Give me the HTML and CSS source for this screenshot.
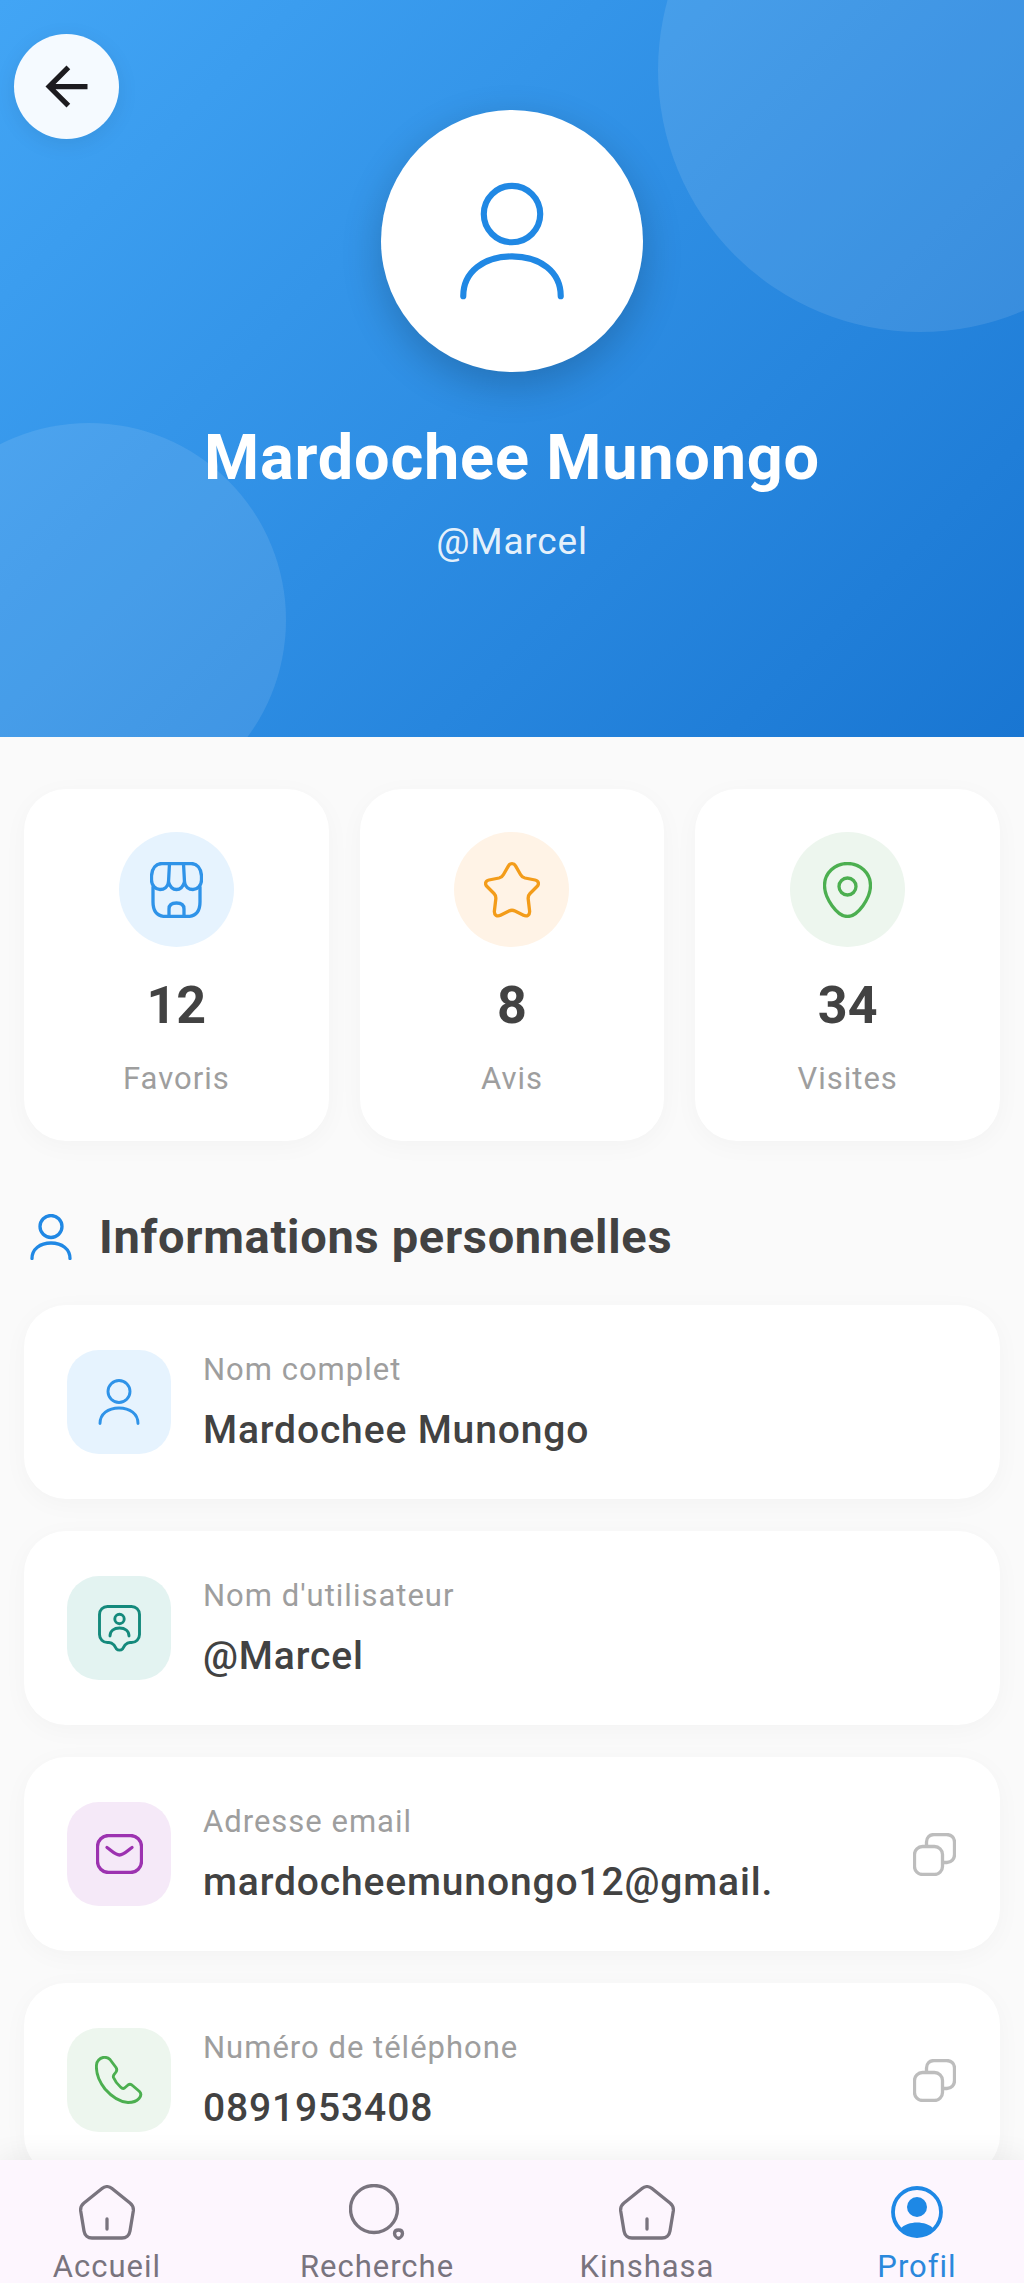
FILE: index.html
```html
<!DOCTYPE html>
<html lang="fr">
<head>
  <meta charset="UTF-8" />
  <title>Profil</title>
  <meta name="viewport" content="width=device-width, initial-scale=1.0" />
  <link rel="stylesheet" href="styles.css">
</head>
<body>
  <!-- Shared icons -->
  <svg class="sprite" aria-hidden="true">
    <symbol id="icon-user" viewBox="0 0 42 46">
      <circle cx="21" cy="12.5" r="11" />
      <path d="M2 44.5C2 35 10 29 21 29C32 29 40 35 40 44.5" />
    </symbol>
    <symbol id="icon-copy" viewBox="0 0 43 43">
      <rect x="1.5" y="13.5" width="28" height="28" rx="8" />
      <path d="M13.5 13V9C13.5 4.5 16.5 1.5 21 1.5H33.5C38 1.5 41.5 4.5 41.5 9V21.5C41.5 26 38.500 29.500 34 29.500H30" />
    </symbol>
    <symbol id="icon-home" viewBox="0 0 56 55">
      <path d="M23 3.500C26 1 30 1 33 3.500L51 18C53.500 20 54.700 23 54.300 26L51 46C50.300 50.500 47 53 43 53H13C9 53 5.700 50.500 5 46L1.700 26C1.300 23 2.500 20 5 18Z" />
      <path d="M28 34V44" />
    </symbol>
  </svg>

  <div class="app">
    <div class="page">
      <!-- Blue header -->
      <header class="hero">
        <div class="blob blob-top"></div>
        <div class="blob blob-left"></div>
        <button class="back-btn" aria-label="Retour">
          <svg width="63" height="63" viewBox="0 0 24 24"><path fill="#1c1b1f" d="M20 11H7.830l5.590-5.590L12 4l-8 8 8 8 1.410-1.410L7.830 13H20v-2z"/></svg>
        </button>
        <div class="avatar">
          <svg class="line-icon avatar-icon" width="108" height="118"><use href="#icon-user"/></svg>
        </div>
        <h1 class="hero-name">Mardochee Munongo</h1>
        <div class="hero-handle">@Marcel</div>
      </header>

      <main class="content">
        <!-- Stats -->
        <section class="stats">
          <div class="stat-card">
            <div class="stat-icon tint-blue">
              <svg class="line-icon" width="53" height="56" viewBox="0 0 53 56">
                <path d="M12 1.500H41C47 1.500 51 6 51.500 14V18C51.500 24 47 27.500 43 27.500C39 27.500 35 25 34.500 20C33 25 30 27.500 26.500 27.500C23 27.500 20 25 18.500 20C18 25 14 27.500 10 27.500C6 27.500 1.500 24 1.500 18V14C2 6 6 1.500 12 1.500Z"/>
                <path d="M19.500 1.500L18.500 20M33.500 1.500L34.500 20"/>
                <path d="M3 25V40C3 50 8 54.500 16 54.500H37C45 54.500 50 50 50 40V25"/>
                <path d="M19 54.500V47C19 43 22 41 26.500 41C31 41 34 43 34 47V54.500"/>
              </svg>
            </div>
            <div class="stat-value">12</div>
            <div class="stat-label">Favoris</div>
          </div>
          <div class="stat-card">
            <div class="stat-icon tint-orange">
              <svg class="line-icon" width="56" height="56" viewBox="0 0 56 56">
                <path d="M24.600 3.600C26 1 30 1 31.400 3.600L36.500 12.500C37.500 14.500 39 15.500 41 16L51 18C54.500 18.700 55.500 22 53 24.500L46 31.500C44.500 33 44 35 44.200 37L45.600 49C46 53 43 55 39.500 53.300L31 49C29 48 27 48 25 49L16.500 53.300C13 55 10 53 10.400 49L11.800 37C12 35 11.500 33 10 31.500L3 24.500C.5 22 1.500 18.700 5 18L15 16C17 15.500 18.500 14.500 19.500 12.500Z"/>
              </svg>
            </div>
            <div class="stat-value">8</div>
            <div class="stat-label">Avis</div>
          </div>
          <div class="stat-card">
            <div class="stat-icon tint-green">
              <svg class="line-icon" width="49" height="56" viewBox="0 0 49 56">
                <path d="M24.500 1.500C37 1.500 47.500 11 47.500 23.500C47.500 36 35 54.500 24.500 54.500C14 54.500 1.500 36 1.500 23.500C1.500 11 12 1.500 24.500 1.500Z"/>
                <circle cx="24.500" cy="24.500" r="8.500"/>
              </svg>
            </div>
            <div class="stat-value">34</div>
            <div class="stat-label">Visites</div>
          </div>
        </section>

        <!-- Personal info -->
        <h2 class="section-title">
          <svg class="line-icon title-icon" width="42" height="46"><use href="#icon-user"/></svg>
          Informations personnelles
        </h2>

        <section class="info-list">
          <div class="info-row">
            <div class="info-icon tint-blue">
              <svg class="line-icon thin" width="42" height="46"><use href="#icon-user"/></svg>
            </div>
            <div class="info-text">
              <div class="info-label">Nom complet</div>
              <div class="info-value">Mardochee Munongo</div>
            </div>
          </div>
          <div class="info-row">
            <div class="info-icon tint-teal">
              <svg class="line-icon thin" width="43" height="47" viewBox="0 0 43 47">
                <path d="M9.500 1.500H33.500C38 1.500 41.500 5 41.500 9.500V29.500C41.500 34 38 37.500 33.500 37.500H32C30 37.500 28.500 38.500 27 40L24.500 44C23 45.500 20 45.500 18.500 44L16 40C14.500 38.500 13 37.500 11 37.500H9.500C5 37.500 1.500 34 1.500 29.500V9.500C1.500 5 5 1.500 9.500 1.500Z"/>
                <circle cx="21.500" cy="14" r="4.700"/>
                <path d="M12 31C12 26 16 23 21.500 23C27 23 31 26 31 31"/>
              </svg>
            </div>
            <div class="info-text">
              <div class="info-label">Nom d'utilisateur</div>
              <div class="info-value">@Marcel</div>
            </div>
          </div>
          <div class="info-row">
            <div class="info-icon tint-purple">
              <svg class="line-icon" width="47" height="40" viewBox="0 0 47 40">
                <rect x="1.500" y="1.500" width="44" height="37" rx="11"/>
                <path d="M11 13.500C16 17 19 21 23.500 21C28 21 31 17 36 13.500"/>
              </svg>
            </div>
            <div class="info-text">
              <div class="info-label">Adresse email</div>
              <div class="info-value">mardocheemunongo12@gmail.</div>
            </div>
            <svg class="line-icon copy-icon" width="43" height="43"><use href="#icon-copy"/></svg>
          </div>
          <div class="info-row">
            <div class="info-icon tint-lime">
              <svg class="line-icon thin" width="48" height="48" viewBox="0 0 48 48">
                <path d="M8 1.500C5 2 1.500 5 1.500 9C1 15 3 24 10 33C17 41 25 46 33 46.500C38 46.500 41 46 44 42.500C46.500 39.500 46.500 37.500 44.500 35.500L37.500 29.500C36 28 34.500 28 33 29L29.500 32C28 33 27 32.500 25.500 31C22 28 20 25 18.500 21.500C18 20 18.500 19 19.500 18L21 16C22 14.500 22 13 21 11.500L15 3.500C13 1.500 11 1 8 1.500Z"/>
              </svg>
            </div>
            <div class="info-text">
              <div class="info-label">Numéro de téléphone</div>
              <div class="info-value">0891953408</div>
            </div>
            <svg class="line-icon copy-icon" width="43" height="43"><use href="#icon-copy"/></svg>
          </div>
        </section>
      </main>
    </div>

    <!-- Bottom navigation -->
    <nav class="bottom-nav">
      <a class="nav-item">
        <span class="nav-icon"><svg class="line-icon" width="56" height="55"><use href="#icon-home"/></svg></span>
        <span class="nav-label">Accueil</span>
      </a>
      <a class="nav-item">
        <span class="nav-icon">
          <svg class="line-icon" width="56" height="56" viewBox="0 0 56 56">
            <circle cx="25" cy="25" r="23.500"/>
            <path d="M45.500 49.500C45.500 47 47.500 46 49.500 46C51.500 46 53.500 47 53.500 49.500C53.500 52 51 54 49.500 54.500C48 54 45.500 52 45.500 49.500Z"/>
          </svg>
        </span>
        <span class="nav-label">Recherche</span>
      </a>
      <a class="nav-item">
        <span class="nav-icon"><svg class="line-icon" width="56" height="55"><use href="#icon-home"/></svg></span>
        <span class="nav-label">Kinshasa</span>
      </a>
      <a class="nav-item active">
        <span class="nav-icon">
          <svg width="52" height="52" viewBox="0 0 52 52">
            <circle cx="26" cy="26" r="24" fill="none" stroke="#1e88e5" stroke-width="3.800"/>
            <circle cx="26" cy="21" r="10" fill="#1e88e5"/>
            <path fill="#1e88e5" d="M9 43C13 38.500 20 36.500 26 36.500C32 36.500 39 38.500 43 43C38.500 48 32 50 26 50C20 50 13.500 48 9 43Z"/>
          </svg>
        </span>
        <span class="nav-label">Profil</span>
      </a>
    </nav>
  </div>
</body>
</html>
```

FILE: styles.css
```css
html, body {
  margin: 0;
  padding: 0;
  height: 100%;
  overflow: hidden;
  background: #fafafa;
  font-family: Roboto, "Liberation Sans", sans-serif;
  color: #424242;
}
.sprite {
  display: none;
}
.app {
  height: 100%;
  display: flex;
  flex-direction: column;
}
.page {
  flex: 1;
  min-height: 0;
  overflow: hidden;
}
/* Line icons take their stroke colour from the tint class */
.line-icon {
  display: block;
  fill: none;
  stroke: currentColor;
  stroke-width: 3.3;
  stroke-linecap: round;
  stroke-linejoin: round;
}
.line-icon.thin {
  stroke-width: 2.9;
}
.tint-blue { background: #e6f3fe; color: #2f93e8; }
.tint-orange { background: #fff3e6; color: #f39c1a; }
.tint-green { background: #edf6ee; color: #4caf50; }
.tint-teal { background: #e3f3f1; color: #14897c; }
.tint-purple { background: #f5e9f8; color: #9c32b0; }
.tint-lime { background: #edf6ee; color: #4caf50; }

/* Header */
.hero {
  position: relative;
  height: 737px;
  overflow: hidden;
  display: flex;
  flex-direction: column;
  align-items: center;
  background: linear-gradient(135deg, #42a5f5, #1976d2);
  color: #fff;
}
.blob {
  position: absolute;
  border-radius: 50%;
  background: rgba(255, 255, 255, 0.1);
}
.blob-top {
  left: 658px;
  top: -192px;
  width: 524px;
  height: 524px;
}
.blob-left {
  left: -108px;
  top: 423px;
  width: 394px;
  height: 394px;
}
.back-btn {
  position: absolute;
  left: 14px;
  top: 34px;
  width: 105px;
  height: 105px;
  padding: 0;
  border: none;
  border-radius: 50%;
  background: rgba(255, 255, 255, 0.95);
  box-shadow: 0 5px 21px rgba(0, 0, 0, 0.08);
  display: flex;
  align-items: center;
  justify-content: center;
}
.avatar {
  position: relative;
  margin-top: 110px;
  width: 262px;
  height: 262px;
  border-radius: 50%;
  background: #fff;
  box-shadow: 0 13px 40px rgba(0, 0, 0, 0.2);
  display: flex;
  align-items: center;
  justify-content: center;
}
.avatar-icon {
  color: #2088e4;
  stroke-width: 2.4;
}
.hero-name {
  position: relative;
  margin: 49px 0 0;
  font-size: 63px;
  line-height: 74px;
  letter-spacing: 0.8px;
  font-weight: 700;
}
.hero-handle {
  position: relative;
  margin-top: 25px;
  font-size: 37px;
  line-height: 44px;
  letter-spacing: 0.8px;
  font-weight: 400;
  color: rgba(255, 255, 255, 0.9);
}

/* Main content */
.content {
  padding: 52px 24px 0;
}
.stats {
  display: grid;
  grid-template-columns: repeat(3, 1fr);
  gap: 31px;
}
.stat-card {
  height: 352px;
  box-sizing: border-box;
  padding-top: 43px;
  border-radius: 42px;
  background: #fff;
  box-shadow: 0 5px 26px rgba(0, 0, 0, 0.03);
  display: flex;
  flex-direction: column;
  align-items: center;
}
.stat-icon {
  width: 115px;
  height: 115px;
  border-radius: 50%;
  display: flex;
  align-items: center;
  justify-content: center;
}
.stat-value {
  margin-top: 28px;
  font-size: 52px;
  line-height: 62px;
  font-weight: 700;
}
.stat-label {
  margin-top: 23px;
  font-size: 31px;
  line-height: 37px;
  letter-spacing: 1px;
  color: #9e9e9e;
}
.section-title {
  margin: 68px 0 40px 6px;
  display: flex;
  align-items: center;
  gap: 27px;
  font-size: 47px;
  line-height: 56px;
  letter-spacing: 0.7px;
  font-weight: 700;
}
.title-icon {
  color: #2088e4;
}
.info-list {
  display: flex;
  flex-direction: column;
  gap: 32px;
}
.info-row {
  height: 194px;
  box-sizing: border-box;
  padding: 0 44px 0 43px;
  border-radius: 42px;
  background: #fff;
  box-shadow: 0 5px 26px rgba(0, 0, 0, 0.03);
  display: flex;
  align-items: center;
  gap: 32px;
}
.info-icon {
  width: 104px;
  height: 104px;
  flex-shrink: 0;
  border-radius: 32px;
  display: flex;
  align-items: center;
  justify-content: center;
}
.info-text {
  flex: 1;
  min-width: 0;
}
.info-label {
  font-size: 31px;
  line-height: 37px;
  letter-spacing: 1px;
  color: #9e9e9e;
}
.info-value {
  margin-top: 19px;
  font-size: 39px;
  line-height: 46px;
  letter-spacing: 0.85px;
  font-weight: 500;
  white-space: nowrap;
}
.copy-icon {
  flex-shrink: 0;
  color: #bdbdbd;
}

/* Bottom navigation */
.bottom-nav {
  position: relative;
  flex-shrink: 0;
  height: 123px;
  overflow: hidden;
  display: flex;
  justify-content: center;
  background: #fdf6fe;
  box-shadow: 0 -5px 26px rgba(0, 0, 0, 0.06);
}
.nav-item {
  flex: 0 0 270px;
  padding-top: 24px;
  display: flex;
  flex-direction: column;
  align-items: center;
  color: #79747e;
}
.nav-item.active {
  color: #2b88dc;
}
.nav-icon {
  width: 56px;
  height: 56px;
  display: flex;
  align-items: center;
  justify-content: center;
}
.nav-label {
  margin-top: 10px;
  font-size: 31px;
  line-height: 33px;
  letter-spacing: 1px;
}
```
